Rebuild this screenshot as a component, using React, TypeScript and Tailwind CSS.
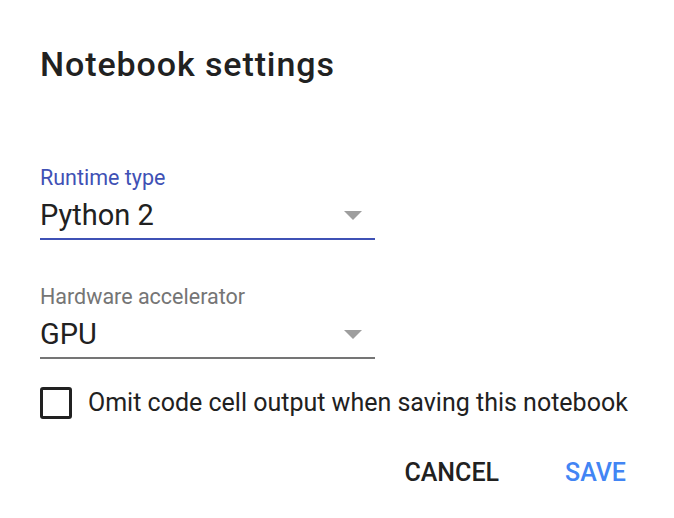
import { useState } from "react";

// ─── Component ───────────────────────────────────────────────────────

function Select({ label, value, active }: { label: string; value: string; active?: boolean }) {
  return (
    <div className="w-[335px]">
      <div className={`text-[21.5px] leading-[24px] ${active ? "text-[#3f51b5]" : "text-[#757575]"}`}>{label}</div>
      <div
        className={`flex items-center justify-between pr-[13px] ${
          active ? "border-b-2 border-[#3f51b5]" : "border-b-2 border-[#757575]"
        }`}
      >
        <span className="text-[29px] leading-[48px] text-[#212121] translate-y-[1px]">{value}</span>
        <svg width="18" height="9" viewBox="0 0 18 9" className="mt-[2px]">
          <path d="M0 0 L18 0 L9 9 Z" fill="#9e9e9e" />
        </svg>
      </div>
    </div>
  );
}

export default function App() {
  const [omit, setOmit] = useState(false);

  return (
    <div
      className="h-[518px] w-[674px] bg-white pl-[40px] pt-[42px]"
      style={{ fontFamily: "Roboto, 'Noto Sans', sans-serif" }}
    >
      <h1 className="text-[34px] font-medium leading-[44px] tracking-[0.9px] text-[#212121]">Notebook settings</h1>

      <div className="mt-[80px]">
        <Select label="Runtime type" value="Python 2" active />
      </div>

      <div className="mt-[45px]">
        <Select label="Hardware accelerator" value="GPU" />
      </div>

      <label className="mt-[25px] flex cursor-pointer items-center gap-[16px]">
        <input type="checkbox" checked={omit} onChange={(e) => setOmit(e.target.checked)} className="hidden" />
        <span className="h-[32px] w-[32px] rounded-[3px] border-[3px] border-[#212121]" />
        <span className="text-[25px] text-[#212121]">Omit code cell output when saving this notebook</span>
      </label>

      <div className="mt-[32px] flex justify-end gap-[66px] pr-[48px]">
        <button className="text-[25px] font-medium text-[#212121]">CANCEL</button>
        <button className="text-[25px] font-medium text-[#4285f4]">SAVE</button>
      </div>
    </div>
  );
}
